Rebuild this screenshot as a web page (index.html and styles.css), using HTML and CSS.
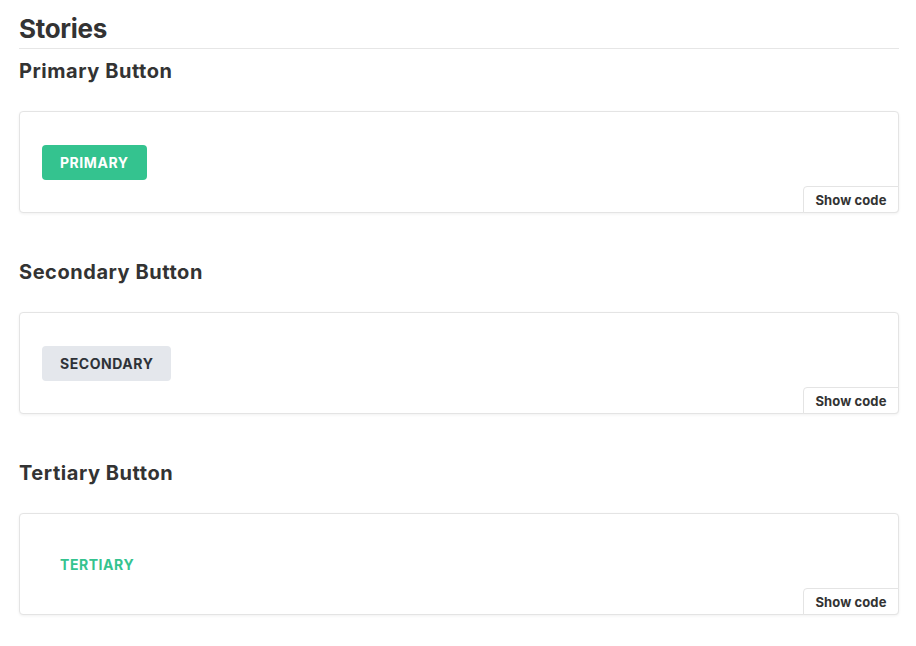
FILE: index.html
```html
<!DOCTYPE html>
<html>
<head>
<meta charset="utf-8">
<link rel="stylesheet" href="styles.css">
</head>
<body>
<div class="docs">
  <h2 class="stories-title">Stories</h2>

  <section class="story">
    <h3 class="story-title">Primary Button</h3>
    <div class="preview">
      <div class="canvas">
        <button class="btn btn-primary">PRIMARY</button>
      </div>
      <button class="show-code">Show code</button>
    </div>
  </section>

  <section class="story">
    <h3 class="story-title">Secondary Button</h3>
    <div class="preview">
      <div class="canvas">
        <button class="btn btn-secondary">SECONDARY</button>
      </div>
      <button class="show-code">Show code</button>
    </div>
  </section>

  <section class="story">
    <h3 class="story-title">Tertiary Button</h3>
    <div class="preview">
      <div class="canvas">
        <button class="btn btn-tertiary">TERTIARY</button>
      </div>
      <button class="show-code">Show code</button>
    </div>
  </section>
</div>
</body>
</html>
```

FILE: styles.css
```css
* { box-sizing: border-box; }
html, body { margin: 0; padding: 0; background: #fff; }
body {
  font-family: Inter, "Open Sans", sans-serif;
  color: #333;
  -webkit-font-smoothing: antialiased;
}
.docs {
  padding: 13px 17px 0 19px;
}
.stories-title {
  margin: 0;
  font-size: 26px;
  line-height: 32px;
  font-weight: 700;
  padding-bottom: 3px;
  border-bottom: 1px solid #e6e6e6;
  letter-spacing: -0.3px;
}
.story-title {
  margin: 0;
  font-size: 20px;
  line-height: 28px;
  font-weight: 700;
  letter-spacing: 0.55px;
}
.stories-title + .story .story-title { margin-top: 8px; }
.story { margin-bottom: 45px; }
.story + .story .story-title { margin-top: 0; }
.preview {
  position: relative;
  margin-top: 26px;
  border: 1px solid #e4e4e4;
  border-radius: 4px;
  box-shadow: 0 1px 3px rgba(0,0,0,0.06);
  background: #fff;
  height: 102px;
}
.canvas {
  padding: 33px 22px;
  display: flex;
  align-items: center;
}
.btn {
  font-family: Inter, "Open Sans", sans-serif;
  font-weight: 700;
  font-size: 14px;
  letter-spacing: 0.55px;
  height: 35px;
  padding: 0 18px;
  border: 0;
  border-radius: 4px;
  line-height: 35px;
}
.btn-primary { background: #34c38f; color: #fff; }
.btn-secondary { background: #e4e7ec; color: #2e3238; }
.btn-tertiary { background: transparent; color: #34c38f; }
.show-code {
  position: absolute;
  right: -1px;
  bottom: -1px;
  width: 96px;
  height: 27px;
  font-family: Inter, "Open Sans", sans-serif;
  font-weight: 700;
  font-size: 13px;
  letter-spacing: 0.1px;
  color: #333;
  background: #fff;
  border: 1px solid #e4e4e4;
  border-radius: 4px 0 4px 0;
  padding: 0;
}
```
